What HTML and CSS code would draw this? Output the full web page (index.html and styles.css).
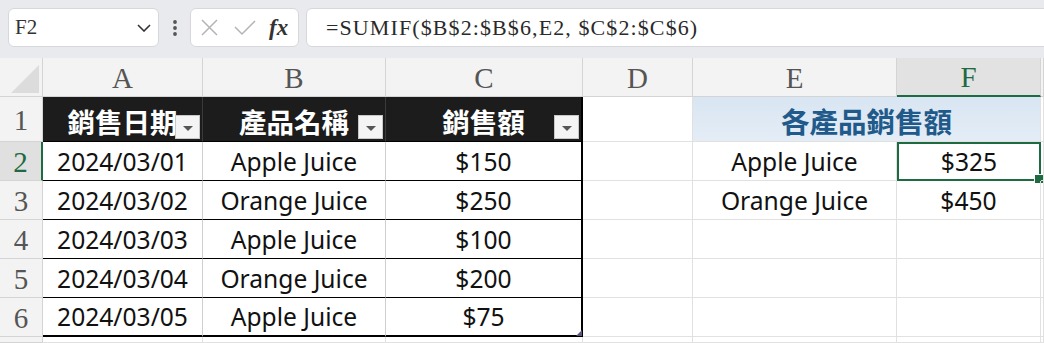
FILE: index.html
```html
<!DOCTYPE html>
<html lang="zh-Hant">

<head>
    <meta charset="UTF-8">
    <title>SUMIF 各產品銷售額</title>
    <link rel="stylesheet" href="styles.css">
</head>

<body>
    <!-- Name box, fx buttons and the formula -->
    <div class="toolbar">
        <div class="name-box">
            <span class="name-text">F2</span>
            <svg class="chevron" width="14" height="8" viewBox="0 0 14 8">
                <polyline points="1,1 7,7 13,1" fill="none" stroke="#333" stroke-width="1.6" />
            </svg>
        </div>
        <div class="dots">
            <svg width="6" height="18" viewBox="0 0 6 18">
                <circle cx="3" cy="3" r="1.9" fill="#555" />
                <circle cx="3" cy="9" r="1.9" fill="#555" />
                <circle cx="3" cy="15" r="1.9" fill="#555" />
            </svg>
        </div>
        <div class="fx-box">
            <svg width="17" height="17" viewBox="0 0 17 17">
                <path d="M1 1 L16 16 M16 1 L1 16" stroke="#b4b4b4" stroke-width="1.5" fill="none" />
            </svg>
            <svg width="22" height="16" viewBox="0 0 22 16">
                <polyline points="1,7 8,14 21,1" stroke="#b4b4b4" stroke-width="1.5" fill="none" />
            </svg>
            <i class="fx">fx</i>
        </div>
        <div class="formula">=SUMIF($B$2:$B$6,E2, $C$2:$C$6)</div>
    </div>

    <!-- The worksheet grid -->
    <div class="sheet">
        <!-- column headers -->
        <div class="corner"><span class="corner-tri"></span></div>
        <div class="col-head">A</div>
        <div class="col-head">B</div>
        <div class="col-head">C</div>
        <div class="col-head">D</div>
        <div class="col-head">E</div>
        <div class="col-head col-selected">F</div>
        <div class="col-head"></div>

        <!-- row 1 -->
        <div class="row-head">1</div>
        <div class="cell tbl-head">銷售日期<span class="filter-btn"></span></div>
        <div class="cell tbl-head">產品名稱<span class="filter-btn"></span></div>
        <div class="cell tbl-head tbl-right">銷售額<span class="filter-btn"></span></div>
        <div class="cell"></div>
        <div class="cell title">各產品銷售額</div>
        <div class="cell"></div>

        <!-- row 2 -->
        <div class="row-head row-selected">2</div>
        <div class="cell tbl">2024/03/01</div>
        <div class="cell tbl">Apple Juice</div>
        <div class="cell tbl tbl-right">$150</div>
        <div class="cell"></div>
        <div class="cell">Apple Juice</div>
        <div class="cell active">$325</div>
        <div class="cell"></div>

        <!-- row 3 -->
        <div class="row-head">3</div>
        <div class="cell tbl">2024/03/02</div>
        <div class="cell tbl">Orange Juice</div>
        <div class="cell tbl tbl-right">$250</div>
        <div class="cell"></div>
        <div class="cell">Orange Juice</div>
        <div class="cell">$450</div>
        <div class="cell"></div>

        <!-- row 4 -->
        <div class="row-head">4</div>
        <div class="cell tbl">2024/03/03</div>
        <div class="cell tbl">Apple Juice</div>
        <div class="cell tbl tbl-right">$100</div>
        <div class="cell"></div>
        <div class="cell"></div>
        <div class="cell"></div>
        <div class="cell"></div>

        <!-- row 5 -->
        <div class="row-head">5</div>
        <div class="cell tbl">2024/03/04</div>
        <div class="cell tbl">Orange Juice</div>
        <div class="cell tbl tbl-right">$200</div>
        <div class="cell"></div>
        <div class="cell"></div>
        <div class="cell"></div>
        <div class="cell"></div>

        <!-- row 6 -->
        <div class="row-head">6</div>
        <div class="cell tbl tbl-last">2024/03/05</div>
        <div class="cell tbl tbl-last">Apple Juice</div>
        <div class="cell tbl tbl-last tbl-right tbl-end">$75</div>
        <div class="cell"></div>
        <div class="cell"></div>
        <div class="cell"></div>
        <div class="cell"></div>

        <!-- row 7, cut off -->
        <div class="row-head"></div>
        <div class="cell"></div>
        <div class="cell"></div>
        <div class="cell"></div>
        <div class="cell"></div>
        <div class="cell"></div>
        <div class="cell"></div>
        <div class="cell"></div>
    </div>
</body>

</html>
```

FILE: styles.css
```css
* {
    box-sizing: border-box;
}

body {
    margin: 0;
    font-family: "Noto Sans", "Noto Sans CJK TC", sans-serif;
    background-color: #ffffff;
    overflow: hidden;
}

/* Toolbar with name box and formula */
.toolbar {
    display: flex;
    align-items: center;
    height: 58px;
    padding: 8px 0 11px 8px;
    background-color: #e8eaed;
}

.name-box {
    display: flex;
    align-items: center;
    justify-content: space-between;
    width: 151px;
    height: 39px;
    padding: 0 7px 0 6px;
    background-color: #ffffff;
    border: 1px solid #d6d8db;
    border-radius: 6px;
}

.name-text {
    font-family: "Liberation Serif", serif;
    font-size: 21px;
    color: #333333;
}

.dots {
    display: flex;
    align-items: center;
    justify-content: center;
    width: 31px;
}

.fx-box {
    display: flex;
    align-items: center;
    gap: 16px;
    width: 109px;
    height: 39px;
    padding-left: 10px;
    background-color: #ffffff;
    border: 1px solid #d6d8db;
    border-radius: 6px;
}

.fx {
    font-family: "Liberation Serif", serif;
    font-size: 23px;
    font-weight: bold;
    color: #333333;
    margin-left: -3px;
}

.formula {
    flex: 1;
    height: 39px;
    margin-left: 7px;
    margin-right: -10px;
    padding-left: 19px;
    line-height: 37px;
    background-color: #ffffff;
    border: 1px solid #d6d8db;
    border-radius: 6px;
    font-family: "Liberation Serif", serif;
    font-size: 22px;
    letter-spacing: 1.1px;
    color: #2a2a2a;
    white-space: nowrap;
}

/* Worksheet grid */
.sheet {
    display: grid;
    grid-template-columns: 43px 160px 183px 197px 110px 204px 144px 1fr;
    grid-template-rows: 39px 45px repeat(5, 39px) 1fr;
    height: 285px;
}

.corner {
    position: relative;
    background-color: #f3f3f3;
    border-right: 1px solid #d4d4d4;
    border-bottom: 1px solid #d4d4d4;
}

.corner-tri {
    position: absolute;
    right: 3px;
    bottom: 3px;
    width: 0;
    height: 0;
    border-left: 28px solid transparent;
    border-bottom: 28px solid #dcdcdc;
}

.col-head {
    display: flex;
    align-items: center;
    justify-content: center;
    background-color: #f3f3f3;
    border-right: 1px solid #d4d4d4;
    border-bottom: 1px solid #d4d4d4;
    font-family: "Liberation Serif", serif;
    font-size: 29px;
    color: #555555;
    padding-top: 2px;
}

.col-selected {
    background-color: #e2e2e2;
    color: #1e6b41;
    border-bottom: 2px solid #1e6b41;
}

.row-head {
    display: flex;
    align-items: center;
    justify-content: center;
    background-color: #f3f3f3;
    border-right: 1px solid #d4d4d4;
    border-bottom: 1px solid #d4d4d4;
    font-family: "Liberation Serif", serif;
    font-size: 29px;
    color: #555555;
    padding-top: 2px;
}

.row-selected {
    background-color: #e0e0e0;
    color: #1e6b41;
    border-right: 2px solid #1e6b41;
}

.cell {
    position: relative;
    display: flex;
    align-items: center;
    justify-content: center;
    border-right: 1px solid #e1e1e1;
    border-bottom: 1px solid #e1e1e1;
    font-size: 24.6px;
    color: #111111;
    white-space: nowrap;
}

/* The formatted table A1:C6 */
.tbl-head {
    background-color: #1c1c1c;
    border-right: 1px solid #3a3a3a;
    border-bottom: 1px solid #000000;
    color: #ffffff;
    font-family: "Noto Sans CJK TC", sans-serif;
    font-size: 27.5px;
    font-weight: bold;
    padding-top: 3px;
}

.filter-btn {
    position: absolute;
    right: 2px;
    bottom: 2px;
    width: 25px;
    height: 24px;
    background-color: #f4f4f4;
    border: 1px solid #c8c8c8;
}

.filter-btn::after {
    content: "";
    position: absolute;
    left: 7px;
    top: 10px;
    border-left: 5px solid transparent;
    border-right: 5px solid transparent;
    border-top: 5px solid #555555;
}

.tbl {
    border-right: 1px solid #d0d0d0;
    border-bottom: 1px solid #000000;
}

.tbl-right {
    border-right: 2px solid #000000;
}

.tbl-last {
    border-bottom: 2px solid #000000;
}

.tbl-end::after {
    content: "";
    position: absolute;
    right: -1px;
    bottom: -1px;
    width: 0;
    height: 0;
    border-left: 6px solid transparent;
    border-bottom: 6px solid #5a5878;
}

/* Summary block */
.title {
    grid-column: span 2;
    background: linear-gradient(to bottom, #d8e5f2, #e4edf6);
    color: #1f5a8a;
    font-family: "Noto Sans CJK TC", sans-serif;
    font-size: 28.5px;
    font-weight: bold;
    padding-top: 3px;
}

.active {
    border: 2px solid #1e6b41;
}

.active::after {
    content: "";
    position: absolute;
    right: -5px;
    bottom: -5px;
    width: 8px;
    height: 8px;
    background-color: #1e6b41;
    border: 1px solid #ffffff;
}
```
